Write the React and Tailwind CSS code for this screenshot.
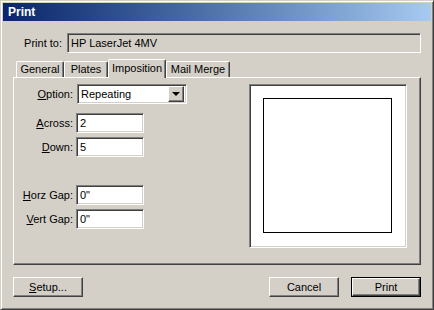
const raised =
  "border border-t-white border-l-white border-r-[#404040] border-b-[#404040] shadow-[inset_-1px_-1px_0_#808080]";
const sunken =
  "border border-t-[#808080] border-l-[#808080] border-r-white border-b-white shadow-[inset_1px_1px_0_#404040,inset_-1px_-1px_0_#d4d0c8]";

function Tab({ label, width, active }) {
  return (
    <div
      className={
        "flex items-center justify-center rounded-t-[2px] border-t border-l border-t-white border-l-white border-r border-r-[#404040] shadow-[inset_-1px_0_0_#808080] bg-[#d4d0c8] " +
        (active ? "h-[19px] mb-[-1px] relative z-10 pb-[2px]" : "h-[16px]")
      }
      style={{ width }}
    >
      {label}
    </div>
  );
}

function Field({ label, acc, value, mt }) {
  const rest = label.slice(1);
  return (
    <div className="flex items-center h-[20px]" style={{ marginTop: mt }}>
      <div className="w-[59px] text-right">
        <span className="underline">{acc}</span>
        {rest}
      </div>
      <div className={"ml-[3px] w-[68px] h-[20px] bg-white flex items-center pl-[3px] " + sunken}>{value}</div>
    </div>
  );
}

export default function App() {
  return (
    <div className="w-[434px] h-[310px] bg-[#d4d0c8] font-['Liberation_Sans',Arial,sans-serif] text-[11px] text-black border border-t-[#d4d0c8] border-l-[#d4d0c8] border-r-[#404040] border-b-[#404040] shadow-[inset_1px_1px_0_#fff,inset_-1px_-1px_0_#808080] p-[2px] flex flex-col">
      {/* title bar */}
      <div className="h-[18px] bg-linear-to-r from-[#0a246a] to-[#a6caf0] flex items-center pl-[5px] text-white font-bold text-[12px]">
        Print
      </div>

      <div className="px-[10px] flex flex-col">
        {/* print to */}
        <div className="mt-[12px] flex items-center h-[20px]">
          <div className="w-[54px] text-right pr-[5px]">Print to:</div>
          <div className={"flex-1 h-[20px] flex items-center pl-[3px] bg-[#d4d0c8] " + sunken}>HP LaserJet 4MV</div>
        </div>

        {/* tabs */}
        <div className="mt-[6px] h-[18px] flex items-end pl-[3px]">
          <Tab label="General" width={48} />
          <Tab label="Plates" width={44} />
          <Tab label="Imposition" width={58} active />
          <Tab label="Mail Merge" width={64} />
        </div>

        {/* panel */}
        <div className={"h-[188px] flex " + raised}>
          <div className="flex flex-col">
            <div className="mt-[6px] flex items-center h-[20px]">
              <div className="w-[59px] text-right">
                <span className="underline">O</span>ption:
              </div>
              <div className={"ml-[4px] w-[110px] h-[20px] bg-white flex items-center pl-[3px] pr-[2px] " + sunken}>
                <span className="flex-1">Repeating</span>
                <div className={"w-[16px] h-[16px] bg-[#d4d0c8] flex items-center justify-center " + raised}>
                  <div className="w-0 h-0 border-x-[4px] border-x-transparent border-t-[4px] border-t-black" />
                </div>
              </div>
            </div>
            <Field label="Across:" acc="A" value="2" mt={9} />
            <Field label="Down:" acc="D" value="5" mt={4} />
            <Field label="Horz Gap:" acc="H" value={'0"'} mt={28} />
            <Field label="Vert Gap:" acc="V" value={'0"'} mt={4} />
          </div>

          {/* preview */}
          <div className={"ml-auto mr-[13px] mt-[6px] w-[158px] h-[164px] bg-white pt-[13px] pl-[13px] " + sunken}>
            <div className="w-[129px] h-[135px] border border-black" />
          </div>
        </div>

        {/* buttons */}
        <div className="mt-[12px] flex">
          <div className={"w-[70px] h-[20px] flex items-center justify-center " + raised}>
            <span>
              <span className="underline">S</span>etup...
            </span>
          </div>
          <div className={"ml-auto w-[70px] h-[20px] flex items-center justify-center " + raised}>Cancel</div>
          <div className="ml-[12px] w-[70px] h-[20px] border border-black">
            <div className={"w-full h-full flex items-center justify-center " + raised}>Print</div>
          </div>
        </div>
      </div>
    </div>
  );
}
